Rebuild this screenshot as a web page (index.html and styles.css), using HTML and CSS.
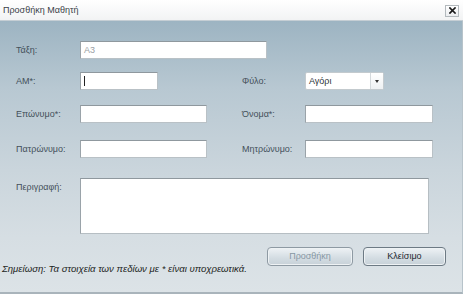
FILE: index.html
```html
<!DOCTYPE html>
<html>
<head>
<meta charset="utf-8">
<link rel="stylesheet" href="styles.css">
</head>
<body>
<div class="dialog">
  <div class="titlebar">
    <span class="title">Προσθήκη Μαθητή</span>
    <span class="close"><svg width="7" height="7" viewBox="0 0 7 7"><path d="M1 1 L6 6 M6 1 L1 6" stroke="#1a1a1a" stroke-width="1.7" stroke-linecap="square"/></svg></span>
  </div>
  <div class="body">
    <div class="row r1">
      <span class="lbl">Τάξη:</span>
      <div class="input wide">A3</div>
    </div>
    <div class="row r2">
      <span class="lbl">ΑΜ*:</span>
      <div class="cell"><div class="input short"><span class="caret"></span></div></div>
      <span class="lbl rl">Φύλο:</span>
      <div class="select"><span class="sel-text">Αγόρι</span><span class="sel-btn"><span class="tri"></span></span></div>
    </div>
    <div class="row r3">
      <span class="lbl">Επώνυμο*:</span>
      <div class="cell"><div class="input mid"></div></div>
      <span class="lbl rl">Όνομα*:</span>
      <div class="input mid2"></div>
    </div>
    <div class="row r4">
      <span class="lbl">Πατρώνυμο:</span>
      <div class="cell"><div class="input mid"></div></div>
      <span class="lbl rl">Μητρώνυμο:</span>
      <div class="input mid2"></div>
    </div>
    <div class="row r5">
      <span class="lbl top">Περιγραφή:</span>
      <div class="textarea"></div>
    </div>
    <div class="buttons">
      <span class="btn disabled">Προσθήκη</span>
      <span class="btn close-btn">Κλείσιμο</span>
    </div>
    <div class="note">Σημείωση: Τα στοιχεία των πεδίων με * είναι υποχρεωτικά.</div>
  </div>
</div>
</body>
</html>
```

FILE: styles.css
```css
html, body {
  margin: 0;
  padding: 0;
}
body {
  width: 463px;
  height: 294px;
  overflow: hidden;
  font-family: "Liberation Sans", Arial, sans-serif;
  font-size: 9px;
  background: #dfe5e9;
}
.dialog {
  width: 463px;
  height: 294px;
  display: flex;
  flex-direction: column;
}
.titlebar {
  height: 20px;
  background: linear-gradient(#ffffff, #f2f3f4);
  border-bottom: 1px solid #c5ced4;
  display: flex;
  align-items: center;
  justify-content: space-between;
  padding: 0 3px;
  color: #3a4248;
}
.title {
  line-height: 11px;
}
.close {
  width: 12px;
  height: 10px;
  border: 1px solid #b3b9bd;
  background: linear-gradient(#ffffff, #eceef0);
  display: flex;
  align-items: center;
  justify-content: center;
  margin-right: 1px;
  margin-top: 1px;
}
.body {
  flex: 1;
  background: linear-gradient(#9db4c2 0%, #b8c8d2 25%, #cad5dc 55%, #d6dee3 80%, #dce3e7 100%);
  padding-left: 16px;
  border-right: 1px solid #b7c3ca;
  border-bottom: 2px solid #a9b4bb;
  display: flex;
  flex-direction: column;
  color: #44505a;
}
.row {
  display: flex;
  align-items: center;
  height: 18px;
}
.r1 { margin-top: 20px; }
.r2 { margin-top: 13px; }
.r3 { margin-top: 15px; }
.r4 { margin-top: 17px; }
.r5 {
  margin-top: 20px;
  height: 56px;
  align-items: flex-start;
}
.lbl {
  width: 64px;
  flex: none;
  line-height: 11px;
}
.lbl.top {
  margin-top: 4px;
}
.lbl.rl {
  width: 63px;
}
.cell {
  width: 162px;
  flex: none;
}
.input {
  box-sizing: border-box;
  height: 18px;
  background: #fff;
  border: 1px solid #b9c1c6;
  border-top-color: #8f989e;
  border-left-color: #9aa3a9;
  color: #9aa0a4;
  padding-left: 3px;
  line-height: 16px;
  display: flex;
  align-items: center;
}
.wide { width: 187px; }
.short { width: 78px; }
.mid { width: 127px; }
.mid2 { width: 128px; }
.caret {
  width: 1px;
  height: 10px;
  background: #222;
}
.select {
  box-sizing: border-box;
  width: 79px;
  height: 18px;
  background: #fff;
  border: 1px solid #c3cace;
  border-radius: 2px;
  display: flex;
  color: #2b3238;
}
.sel-text {
  flex: 1;
  padding-left: 3px;
  line-height: 16px;
}
.sel-btn {
  width: 12px;
  border-left: 1px solid #d4d9dc;
  background: linear-gradient(#ffffff, #eef1f3);
  display: flex;
  align-items: center;
  justify-content: center;
}
.tri {
  width: 0;
  height: 0;
  border-left: 2px solid transparent;
  border-right: 2px solid transparent;
  border-top: 3px solid #333;
}
.textarea {
  box-sizing: border-box;
  width: 349px;
  height: 56px;
  background: #fff;
  border: 1px solid #b6bec3;
  border-top-color: #8f989e;
  border-left-color: #9aa3a9;
}
.buttons {
  display: flex;
  justify-content: flex-end;
  gap: 10px;
  margin-top: 13px;
  padding-right: 16px;
  height: 19px;
}
.btn {
  box-sizing: border-box;
  height: 19px;
  border: 1px solid #6d7a84;
  border-radius: 4px;
  box-shadow: inset 0 0 0 1px #eef2f4;
  background: linear-gradient(#eef2f5, #d3dce2 60%, #c7d1d8);
  display: flex;
  align-items: center;
  justify-content: center;
  line-height: 11px;
}
.disabled {
  width: 86px;
  color: #8797a3;
  border-color: #8e9aa3;
}
.close-btn {
  width: 83px;
  color: #1f2930;
}
.note {
  margin-top: -3px;
  margin-left: -14px;
  font-style: italic;
  font-size: 9.6px;
  color: #1c1f22;
  line-height: 11px;
}
```
